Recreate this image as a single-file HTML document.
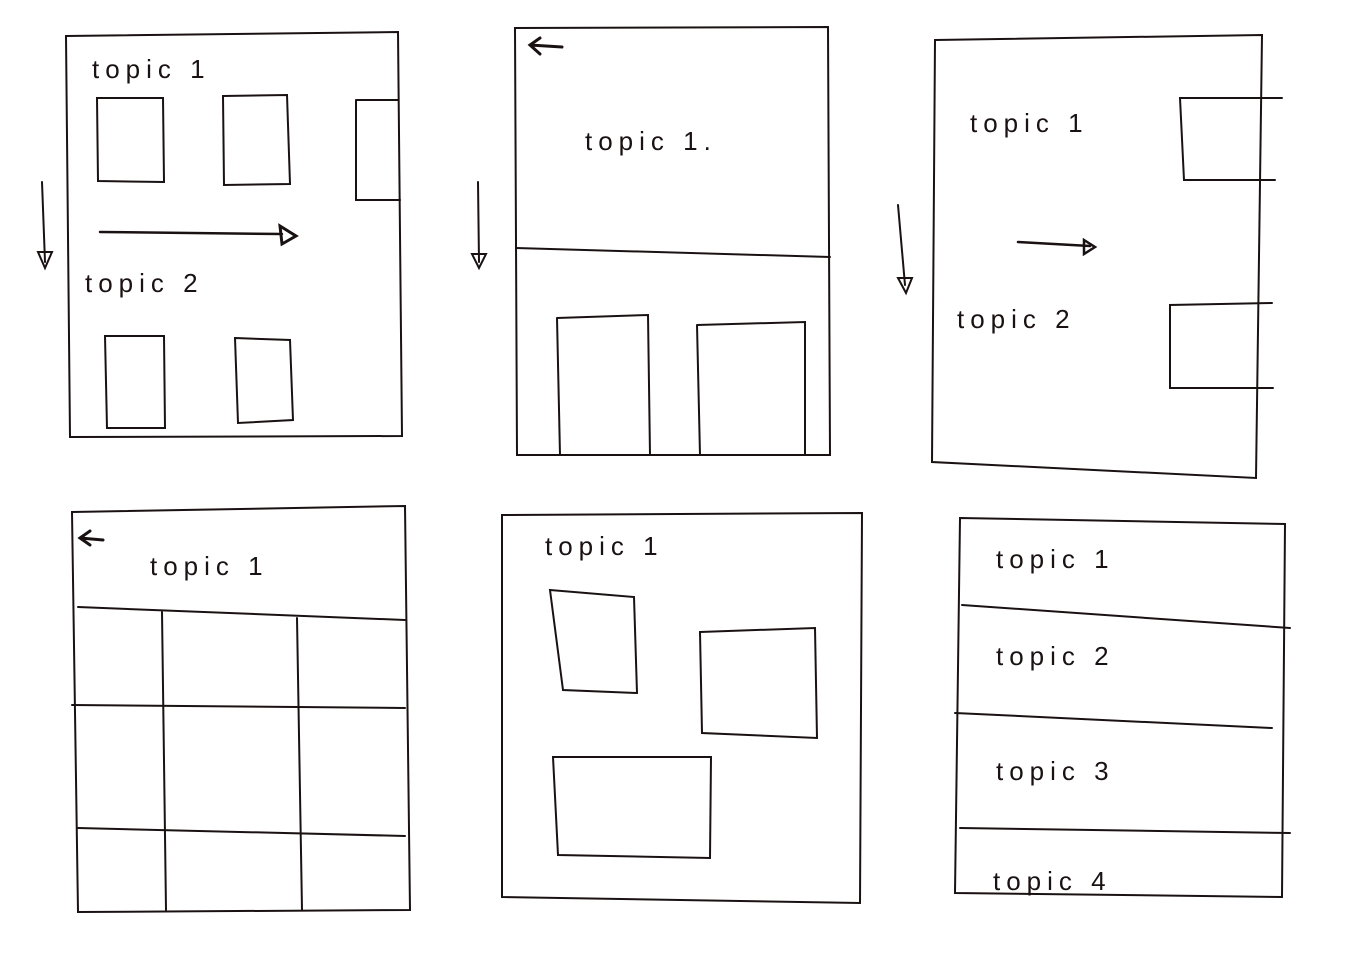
<!DOCTYPE html>
<html><head><meta charset="utf-8"><style>
html,body{margin:0;padding:0;background:#fff;width:1366px;height:954px;overflow:hidden}
svg{display:block}
text{font-family:"Liberation Sans",sans-serif;font-size:26px;fill:#1a1212;letter-spacing:6px}
</style></head><body>
<svg width="1366" height="954" viewBox="0 0 1366 954" xmlns="http://www.w3.org/2000/svg">
<g fill="none" stroke="#1a1212" stroke-width="2" stroke-linecap="round">
<!-- Panel 1 -->
<path d="M66 36 L398 32 L402 436 L70 437 Z"/>
<path d="M97 98 L163 98 L164 182 L98 181 Z"/>
<path d="M223 96 L287 95 L290 184 L224 185 Z"/>
<path d="M356 100 L398 100 M356 100 L356 200 L400 200"/>
<path d="M100 232 L282 234" stroke-width="2.5"/>
<path d="M280 226 L296 236 L282 244 Z" stroke-width="3"/>
<path d="M42 182 L45 262"/>
<path d="M38 252 L52 252 L45 268 Z"/>
<path d="M105 336 L164 336 L165 428 L107 428 Z"/>
<path d="M235 338 L290 340 L293 420 L238 423 Z"/>
<!-- Panel 2 -->
<path d="M515 28 L828 27 L830 455 L517 455 Z"/>
<path d="M530 45 L562 47 M540 38 L530 45 L540 54" stroke-width="3"/>
<path d="M516 248 L830 257"/>
<path d="M478 182 L479 262"/>
<path d="M472 254 L486 254 L479 268 Z"/>
<path d="M557 318 L648 315 L650 455 M557 318 L560 455"/>
<path d="M697 325 L805 322 L805 455 M697 325 L700 455"/>
<!-- Panel 3 -->
<path d="M935 40 L1262 35 L1256 478 L932 462 Z"/>
<path d="M1282 98 L1180 98 L1184 180 L1275 180"/>
<path d="M1018 242 L1090 246" stroke-width="2.5"/>
<path d="M1084 240 L1095 247 L1084 254 Z" stroke-width="2.5"/>
<path d="M898 205 L905 285"/>
<path d="M898 278 L912 278 L906 293 Z"/>
<path d="M1272 303 L1170 305 L1170 388 L1273 388"/>
<!-- Panel 4 -->
<path d="M72 512 L405 506 L410 910 L78 912 Z"/>
<path d="M80 538 L103 540 M90 531 L80 538 L90 545" stroke-width="3"/>
<path d="M78 607 L405 620"/>
<path d="M72 705 L405 708"/>
<path d="M78 828 L405 836"/>
<path d="M162 612 L166 910"/>
<path d="M297 618 L302 910"/>
<!-- Panel 5 -->
<path d="M502 515 L862 513 L860 903 L502 897 Z"/>
<path d="M550 590 L634 597 L637 693 L563 690 Z"/>
<path d="M700 632 L815 628 L817 738 L702 733 Z"/>
<path d="M553 757 L711 757 L710 858 L558 855 Z"/>
<!-- Panel 6 -->
<path d="M960 518 L1285 524 L1282 897 L955 893 Z"/>
<path d="M962 605 L1290 628"/>
<path d="M955 713 L1272 728"/>
<path d="M960 828 L1290 833"/>
</g>
<text x="92" y="78">topic 1</text>
<text x="85" y="292">topic 2</text>
<text x="585" y="150">topic 1.</text>
<text x="970" y="132">topic 1</text>
<text x="957" y="328">topic 2</text>
<text x="150" y="575">topic 1</text>
<text x="545" y="555">topic 1</text>
<text x="996" y="568">topic 1</text>
<text x="996" y="665">topic 2</text>
<text x="996" y="780">topic 3</text>
<text x="993" y="890">topic 4</text>
</svg>
</body></html>
